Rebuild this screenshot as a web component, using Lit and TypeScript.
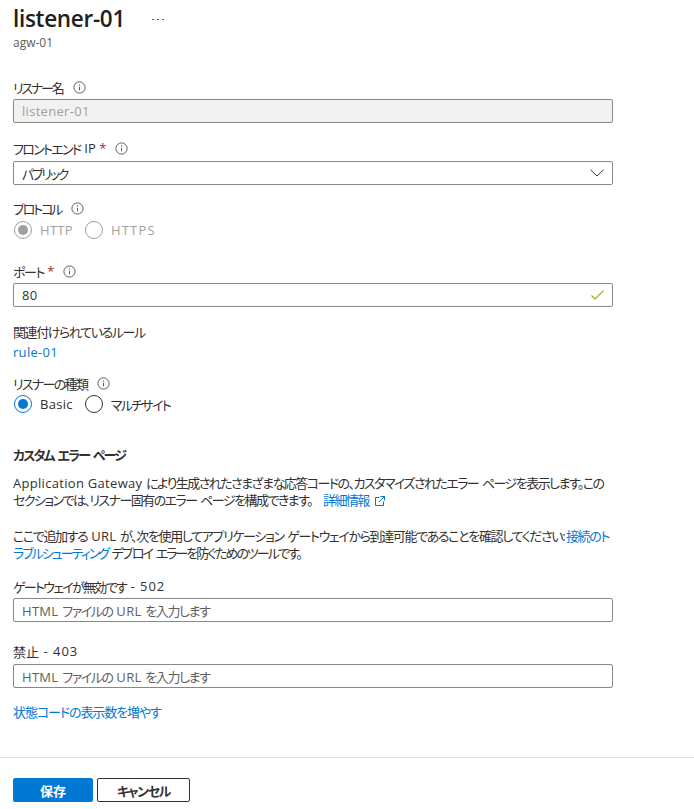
import { LitElement, css, html } from 'lit'
import { customElement } from 'lit/decorators.js'

const info = html`<svg class="info" width="13" height="13" viewBox="0 0 13 13">
  <circle cx="6.5" cy="6.5" r="5.6" fill="none" stroke="#605e5c" stroke-width="1"></circle>
  <path d="M6.5 5.8v3.6" stroke="#605e5c" stroke-width="1"></path>
  <circle cx="6.5" cy="3.9" r=".7" fill="#605e5c"></circle>
</svg>`

@customElement('app-root')
export class AppRoot extends LitElement {
  static styles = css`
    :host {
      display: block;
      height: 809px;
      overflow: hidden;
      background: #fff;
      color: #323130;
      font-family: 'Open Sans', 'Noto Sans CJK JP', sans-serif;
      font-size: 13px;
      font-feature-settings: 'palt';
      letter-spacing: -1.4px;
    }
    .en {
      letter-spacing: 0.3px;
    }
    .num {
      letter-spacing: 1px;
    }
    .wide {
      letter-spacing: 1.2px;
    }
    .kanji {
      letter-spacing: 0;
    }
    .tight {
      letter-spacing: -2.2px;
    }
    .snug {
      letter-spacing: -1.7px;
    }
    .loose {
      letter-spacing: -1.1px;
    }
    .page {
      padding: 0 13px;
      width: 600px;
    }
    .head {
      display: flex;
      align-items: center;
      height: 37px;
    }
    h1 {
      margin: 0;
      font-size: 22.5px;
      letter-spacing: -0.3px;
      line-height: 37px;
      font-weight: 600;
      color: #201f1e;
    }
    .more {
      margin-left: 27px;
      margin-top: 2px;
    }
    .sub {
      font-size: 12px;
      letter-spacing: 0;
      line-height: 16px;
      margin-top: -2px;
      color: #605e5c;
    }
    .label {
      display: flex;
      align-items: center;
      height: 20px;
      white-space: pre;
    }
    .label .info {
      margin-left: 10px;
    }
    .star {
      color: #a4262c;
      margin-left: 3px;
      letter-spacing: 0;
    }
    .star + .info {
      margin-left: 9px;
    }
    .box {
      box-sizing: border-box;
      display: flex;
      align-items: center;
      justify-content: space-between;
      height: 24px;
      border: 1px solid #8a8886;
      border-radius: 2px;
      padding: 0 8px;
      background: #fff;
      white-space: pre;
    }
    .box.off {
      background: #f3f2f1;
      color: #a19f9d;
    }
    .box.hint {
      color: #605e5c;
    }
    .radios {
      display: flex;
      align-items: center;
      height: 20px;
      padding-left: 1px;
    }
    .radio {
      box-sizing: border-box;
      display: flex;
      align-items: center;
      justify-content: center;
      width: 18px;
      height: 18px;
      border: 1px solid #323130;
      border-radius: 50%;
      margin-right: 8px;
    }
    .radio.on {
      border-color: #0078d4;
    }
    .radio.on::after {
      content: '';
      width: 10px;
      height: 10px;
      border-radius: 50%;
      background: #0078d4;
    }
    .radio.dis {
      border-color: #a19f9d;
    }
    .radio.dis::after {
      background: #a19f9d;
    }
    .radios span.text {
      margin-right: 12px;
    }
    .radios.dis span.text {
      color: #a19f9d;
    }
    a {
      color: #0078d4;
      text-decoration: none;
    }
    .link-line {
      line-height: 20px;
    }
    h2 {
      margin: 0;
      font-size: 13px;
      font-weight: 700;
      line-height: 18px;
      color: #323130;
      letter-spacing: -1.8px;
      white-space: pre;
    }
    p {
      margin: 0;
      line-height: 17px;
      white-space: pre;
    }
    .line1 { letter-spacing: -1.55px; }
    .line2 { letter-spacing: -1.55px; }
    .line3 { letter-spacing: -1.35px; }
    .line4 { letter-spacing: -2px; }
    .ext {
      margin-left: 6px;
      vertical-align: -1px;
    }
    .rule {
      height: 1px;
      background: #e1dfdd;
      margin-top: 35px;
    }
    .actions {
      display: flex;
      gap: 4px;
      padding: 20px 13px 0;
    }
    button {
      box-sizing: border-box;
      height: 24px;
      border-radius: 2px;
      font: inherit;
      font-weight: 700;
      letter-spacing: inherit;
      padding: 0;
      border: 1px solid #323130;
      background: #fff;
      color: #323130;
      width: 93px;
    }
    button.primary {
      width: 80px;
      border-color: #0078d4;
      background: #0078d4;
      color: #fff;
      letter-spacing: 0;
    }
    .gap-first { margin-top: 26px; }
    .gap-front { margin-top: 15px; }
    .gap-proto { margin-top: 13px; }
    .gap-port { margin-top: 21px; }
    .gap-rules { margin-top: 14px; }
    .gap-type { margin-top: 11px; }
    .gap-heading { margin-top: 32px; }
    .gap-p1 { margin-top: 11px; }
    .gap-p2 { margin-top: 19px; }
    .gap-502 { margin-top: 14px; }
    .gap-403 { margin-top: 19px; }
    .gap-more { margin-top: 14px; }
    .m1 { margin-top: 1px; }
    .m2 { margin-top: 2px; }
    .m3 { margin-top: 3px; }
  `

  render() {
    return html`
      <div class="page">
        <div class="head">
          <h1>listener-01</h1>
          <svg class="more" width="12" height="4" viewBox="0 0 12 4" fill="#605e5c">
            <rect x="0" y="1" width="2" height="1"></rect>
            <rect x="5" y="1" width="2" height="1"></rect>
            <rect x="10" y="1" width="2" height="1"></rect>
          </svg>
        </div>
        <div class="sub">agw-01</div>

        <div class="label gap-first"><span class="tight">リスナー名</span>${info}</div>
        <div class="box off m2"><span class="en">listener-01</span></div>

        <div class="label gap-front"><span class="snug">フロントエンド</span><span class="en"> IP</span><span class="star">*</span>${info}</div>
        <div class="box m3">
          <span class="tight">パブリック</span>
          <svg width="14" height="8" viewBox="0 0 14 8">
            <path d="M.5 .8 7 7 13.5 .8" fill="none" stroke="#323130"></path>
          </svg>
        </div>

        <div class="label gap-proto"><span class="tight">プロトコル</span>${info}</div>
        <div class="radios dis m2">
          <i class="radio on dis"></i><span class="text en">HTTP</span>
          <i class="radio dis"></i><span class="text wide">HTTPS</span>
        </div>

        <div class="label gap-port"><span>ポート</span><span class="star">*</span>${info}</div>
        <div class="box m2">
          <span class="en">80</span>
          <svg width="13" height="10" viewBox="0 0 13 10">
            <path d="M.5 5.5 4 9 12.5 .7" fill="none" stroke="#7fba00" stroke-width="1.1"></path>
          </svg>
        </div>

        <div class="label gap-rules">関連付けられているルール</div>
        <div class="link-line m1"><a class="en" href="#">rule-01</a></div>

        <div class="label gap-type"><span class="snug">リスナーの種類</span>${info}</div>
        <div class="radios m1">
          <i class="radio on"></i><span class="text en">Basic</span>
          <i class="radio"></i><span class="text snug">マルチサイト</span>
        </div>

        <h2 class="gap-heading">カスタム<span class="en"> </span>エラー<span class="en"> </span>ページ</h2>
        <p class="gap-p1"><span class="line1"><span class="en">Application Gateway </span>により生成されたさまざまな応答コードの、カスタマイズされたエラー<span class="en"> </span>ページを表示します。この</span>
<span class="line2">セクションでは、リスナー固有のエラー<span class="en"> </span>ページを構成できます。<span class="en">   </span><a href="#">詳細情報<svg class="ext" width="10" height="10" viewBox="0 0 10 10" fill="none" stroke="#0078d4">
              <path d="M4.5 1.5H.5v8h8V5.5M5.5 .5h4v4M9.5 .5 4 6"></path>
            </svg></a></span></p>
        <p class="gap-p2"><span class="line3">ここで追加する<span class="en"> URL </span>が、次を使用してアプリケーション<span class="en"> </span>ゲートウェイから到達可能であることを確認してください<span class="en">:</span><a href="#">接続のト</a></span>
<span class="line4"><a href="#">ラブルシューティング</a><span class="en"> </span>デプロイ<span class="en"> </span>エラーを防ぐためのツールです。</span></p>

        <div class="label gap-502"><span class="snug">ゲートウェイが無効です</span><span class="num"> - 502</span></div>
        <div class="box hint m2"><span><span class="en">HTML </span>ファイルの<span class="en"> URL </span>を入力します</span></div>

        <div class="label gap-403"><span class="kanji">禁止</span><span class="num"> - 403</span></div>
        <div class="box hint m3"><span><span class="en">HTML </span>ファイルの<span class="en"> URL </span>を入力します</span></div>

        <div class="link-line gap-more"><a class="loose" href="#">状態コードの表示数を増やす</a></div>
      </div>
      <div class="rule"></div>
      <div class="actions">
        <button class="primary">保存</button>
        <button>キャンセル</button>
      </div>
    `
  }
}
